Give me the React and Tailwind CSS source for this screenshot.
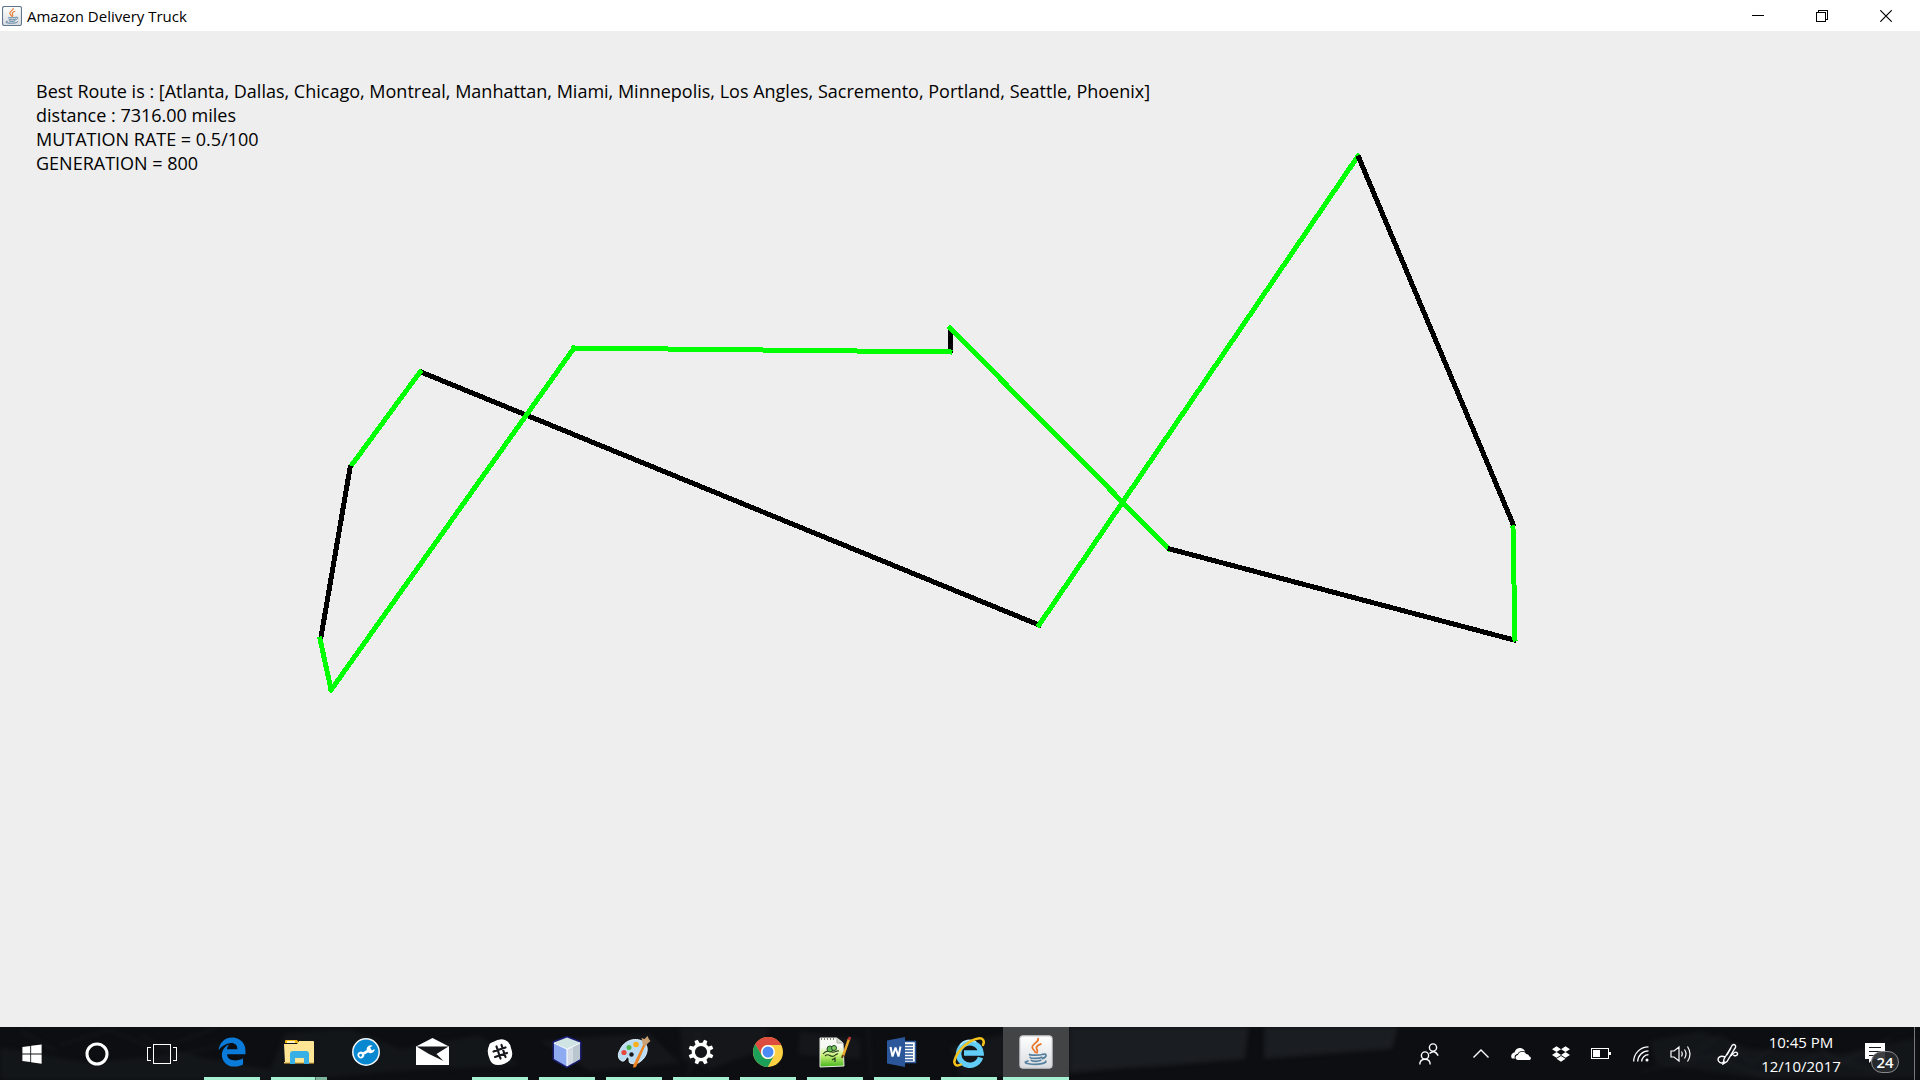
import React from "react";
import { FaWindows, FaDropbox, FaEdgeLegacy } from "react-icons/fa";

const GREEN = "#00ff00";
const BLACK = "#000000";

// Route legs in canvas pixels: x1, y1, x2, y2, colour
const legs = [
  [950, 298, 950, 319, BLACK],
  [950, 321, 574, 317, GREEN],
  [1169, 518, 950, 297, GREEN],
  [421, 341, 1039, 594, BLACK],
  [574, 317, 331, 659, GREEN],
  [420, 341, 351, 435, GREEN],
  [350, 437, 321, 606, BLACK],
  [320, 608, 331, 658, GREEN],
  [1039, 594, 1358, 125, GREEN],
  [1359, 127, 1513, 493, BLACK],
  [1514, 609, 1170, 518, BLACK],
  [1513, 497, 1515, 608, GREEN],
];

const report = [
  "Best Route is : [Atlanta, Dallas, Chicago, Montreal, Manhattan, Miami, Minnepolis, Los Angles, Sacremento, Portland, Seattle, Phoenix]",
  "distance : 7316.00 miles",
  "MUTATION RATE = 0.5/100",
  "GENERATION = 800",
];

function JavaIcon({ size }) {
  return (
    <svg width={size} height={size} viewBox="0 0 32 32" fill="none" aria-hidden="true">
      <defs>
        <linearGradient id={`tile${size}`} x1="0" y1="0" x2="0" y2="1">
          <stop offset="0" stopColor="#ffffff" />
          <stop offset="1" stopColor="#d9dcdf" />
        </linearGradient>
      </defs>
      <rect x="0.8" y="0.8" width="30.4" height="30.4" rx="3" fill={`url(#tile${size})`} stroke={size < 24 ? "#5f7890" : "#c3c8cc"} strokeWidth={size < 24 ? 1.8 : 1} />
      <path d="M18 3.500c1 3-5.500 4.500-5.500 8 0 2 2.200 2.800 2.800 4.800M20.500 8.500c-3 1-4.500 2.500-4 4.200.5 1.400 1.500 2 .4 4" stroke="#e8762b" strokeWidth="1.700" strokeLinecap="round" />
      <path d="M10 18.200c-1.500 1 10 1.200 12.500-.2M10.500 21c0 1.200 8 1.500 11 0M11.500 23.800c1 1.200 6.500 1.300 9 0M22.500 18.300c3.500-1.500 4.500 2.200-.5 3.900M8.500 24.500c-8 2 5 4 13 2.500 2.500-.5 4.500-1.500 3.500-2.300" stroke="#55809f" strokeWidth="1.600" strokeLinecap="round" />
    </svg>
  );
}

function TitleBar() {
  const control = "flex h-full w-16 items-center justify-center hover:bg-gray-200";
  return (
    <header className="flex h-[31px] shrink-0 items-center bg-white px-0.5 text-black">
      <JavaIcon size={20} />
      <h1 className="ml-[5px] flex-1 font-['Open_Sans','Noto_Sans',sans-serif] text-[15px] leading-5 font-normal">Amazon Delivery Truck</h1>
      <button className={control} aria-label="Minimize">
        <svg width="12" height="12" stroke="currentColor" shapeRendering="crispEdges"><path d="M0 5.500h12" /></svg>
      </button>
      <button className={control} aria-label="Restore">
        <svg width="12" height="12" fill="none" stroke="currentColor" shapeRendering="crispEdges"><path d="M.5 2.500h9v9h-9zM2.500 2.500v-2h9v9h-2" /></svg>
      </button>
      <button className={control} aria-label="Close">
        <svg width="12" height="12" stroke="currentColor" strokeWidth="1.200"><path d="M.3.3l11.400 11.400M11.700.3L.3 11.700" /></svg>
      </button>
    </header>
  );
}

function FolderIcon() {
  return (
    <svg width="30" height="26" viewBox="0 0 30 26">
      <path d="M1 2q0-1 1-1h11l2 3H1z" fill="#f5b914" />
      <path d="M3 2h8v2H3z" fill="#fff3c4" />
      <path d="M0 5h13l2-3h14q1 0 1 1v21H1z" fill="#ffe594" />
      <path d="M0 23h30v1.500H0z" fill="#e9c45f" />
      <path d="M6 25V15q0-3 3-3h13q3 0 3 3v10h-5v-6h-9v6z" fill="#38b0e5" />
    </svg>
  );
}

function WrenchIcon() {
  return (
    <svg width="28" height="28" viewBox="0 0 28 28">
      <circle cx="14" cy="14" r="13.200" fill="#0788d1" stroke="#f5f8fa" strokeWidth="1.500" />
      <g transform="rotate(-31 14 14)" fill="#fff">
        <path d="M9 12.600h9v2.800H9z" />
        <path d="M23 12.200h-3.200v3.600H23a4 4 0 1 1 0-3.600z" />
        <circle cx="8" cy="14" r="3.300" />
        <circle cx="7.700" cy="14" r="1.400" fill="#0788d1" />
      </g>
    </svg>
  );
}

function MailIcon() {
  return (
    <svg width="34" height="28" viewBox="0 0 34 28">
      <path d="M0 8.500L16.500 0 33 8.500V27H0z" fill="#fff" />
      <path d="M.5 8.500h32L20.500 16l7 7L13 16z" fill="#15171b" />
    </svg>
  );
}

function SlackIcon() {
  return (
    <svg width="26" height="26" viewBox="0 0 26 26">
      <path d="M2 7Q2 4 6 3q7-4 12-2 5 2 6 8 3 8-1 12-5 5-12 5-6 0-8-5Q-1 12 2 7z" fill="#fff" />
      <path d="M9.500 7.500l4 12M14.500 6l4 12M6.500 12.500l12-4M8 18l12-4" stroke="#18191c" strokeWidth="2.200" strokeLinecap="round" />
    </svg>
  );
}

function CubeIcon() {
  return (
    <svg width="32" height="32" viewBox="0 0 32 32">
      <path d="M16 1.500l13 5V23l-13 7.500L3 23V6.500z" fill="none" stroke="#1b1d73" strokeWidth="3" strokeLinejoin="round" />
      <path d="M16 1.500l13 5L16 13 3 6.500z" fill="#cfe4e3" />
      <path d="M3 6.500L16 13v17.500L3 23z" fill="#8eaaf0" />
      <path d="M29 6.500L16 13v17.500L29 23z" fill="#d3dae3" />
      <path d="M22 10l7-3.500V23l-7 4z" fill="#b9c6d0" />
      <path d="M3 7l13 6 13-6M16 13v17" fill="none" stroke="#f4faff" strokeWidth="1.200" />
    </svg>
  );
}

function PaintIcon() {
  return (
    <svg width="34" height="34" viewBox="0 0 34 34">
      <path d="M3 15C7 5 20 1 28 8c5 6 1 16-7 20-3 1-6 1-8 0-2-2 0-5-2-6s-2 5-6 4c-5-2-4-8-2-11z" fill="#b9dcf2" stroke="#e4f4fd" />
      <circle cx="14.500" cy="19.500" r="2.200" fill="#17191c" />
      <circle cx="7" cy="17.500" r="2.600" fill="#e8473c" />
      <circle cx="12" cy="12.500" r="2.500" fill="#50b848" />
      <circle cx="19" cy="9.500" r="2.800" fill="#f8b01c" />
      <path d="M26.500 9l2 1-9.500 22-3 .8.500-3z" fill="#ee8422" />
      <path d="M25.500 9q0-3-1-6l3 1 3-3q1 3 3 5-3 2-5 5z" fill="#cba273" />
    </svg>
  );
}

function GearIcon() {
  return (
    <svg width="26" height="26" viewBox="-13 -13 26 26">
      <circle r="7.700" fill="none" stroke="#fff" strokeWidth="3.200" />
      {[22, 67, 112, 157, 202, 247, 292, 337].map((a) => (
        <path key={a} transform={`rotate(${a})`} d="M-2.300-8.300L-1.700-12.600h3.400L2.300-8.300z" fill="#fff" />
      ))}
    </svg>
  );
}

function ChromeIcon() {
  return (
    <svg width="32" height="32" viewBox="0 0 32 32">
      <circle cx="16" cy="16" r="15" fill="#fdd044" />
      <path d="M16 9h13.300A15 15 0 0 0 3.200 8.300L9.900 19.500A7 7 0 0 1 16 9z" fill="#dc4d3f" />
      <path d="M3.200 8.300A15 15 0 0 0 15.800 31l6.300-11.500a7 7 0 0 1-12.200 0z" fill="#1c9f59" />
      <circle cx="16" cy="16" r="7" fill="#fff" />
      <circle cx="16" cy="16" r="5.500" fill="#4c8bf5" />
    </svg>
  );
}

function NotepadIcon() {
  return (
    <svg width="34" height="32" viewBox="0 0 34 32" fill="none">
      <defs>
        <linearGradient id="page" x1="0" y1="0" x2="0" y2="1">
          <stop offset="0.300" stopColor="#f7f9f5" />
          <stop offset="0.600" stopColor="#c9f177" />
          <stop offset="1" stopColor="#42b51b" />
        </linearGradient>
      </defs>
      <path d="M2 2h17l6 5 1 23-24 1z" fill="url(#page)" stroke="#e9ece5" />
      <path d="M19 2v5h6" fill="#d8dcd3" stroke="#aab0a3" />
      <path d="M3 3h15" stroke="#7c8276" strokeDasharray="1 2" strokeWidth="2" />
      <path d="M5 18c3-4 6-3 9-2s4-2 7-1M7 20c4-4 5 2 9 0 2-1 3-3 4-2M14 24l3-2v4" stroke="#263b1c" strokeWidth="1.200" />
      <circle cx="12" cy="13" r="3" fill="#66b957" stroke="#244c1d" />
      <circle cx="16" cy="12" r="2.500" fill="#80ca69" stroke="#244c1d" />
      <path d="M31 3L25 20" stroke="#eba92d" strokeWidth="2.500" />
      <path d="M32 1l-1 3" stroke="#bd3d35" strokeWidth="2.500" />
      <path d="M25 19l-1 3" stroke="#65421b" strokeWidth="2" />
    </svg>
  );
}

function WordIcon() {
  return (
    <svg width="30" height="30" viewBox="0 0 30 30">
      <path d="M15 4.500h13.500v21H15z" fill="#fff" stroke="#2b579a" strokeWidth="1.500" />
      <path d="M17 8h9M17 11h9M17 14h9M17 17h9M17 20h9M17 23h9" stroke="#2b579a" strokeWidth="1.300" />
      <path d="M0 3.500L18 0v30L0 26.500z" fill="#2b579a" />
      <path d="M3.500 10l2 9.500 3-9 3 9 2-10" fill="none" stroke="#fff" strokeWidth="2" strokeLinejoin="bevel" />
    </svg>
  );
}

function ExplorerIcon() {
  return (
    <svg width="34" height="32" viewBox="0 0 34 32" fill="none">
      <path d="M28.500 21.500A11.200 11.200 0 1 1 29 17H12" stroke="#62cdf6" strokeWidth="5.500" />
      <path d="M8 9.500a12 12 0 0 1 16-3.500" stroke="#b7ecff" strokeWidth="1.500" />
      <path d="M31 9c2-4 0-7.500-5-6.500C17 4 6 14 3 23c-2 5 1 8 6 5.500" stroke="#f5c21b" strokeWidth="2.500" strokeLinecap="round" />
    </svg>
  );
}

const apps = [
  ["Microsoft Edge", <FaEdgeLegacy size={30} color="#0a7bd9" />, true],
  ["File Explorer", <FolderIcon />, true],
  ["Support Assistant", <WrenchIcon />, false],
  ["Mail", <MailIcon />, false],
  ["Slack", <SlackIcon />, true],
  ["NetBeans", <CubeIcon />, true],
  ["Paint", <PaintIcon />, true],
  ["Settings", <GearIcon />, true],
  ["Google Chrome", <ChromeIcon />, true],
  ["Notepad++", <NotepadIcon />, true],
  ["Word", <WordIcon />, true],
  ["Internet Explorer", <ExplorerIcon />, true],
];

const line = { fill: "none", stroke: "#fff", strokeWidth: 1.4 };

const tray = [
  ["Show hidden icons", <svg width="16" height="9" {...line}><path d="M.5 8.500L8 1l7.500 7.500" /></svg>],
  ["OneDrive", (
    <svg width="20" height="13" viewBox="0 0 20 13" fill="#fff">
      <path d="M1 11.500C-1 9 1 5.500 3.500 5.500 4 2 8 0 11 1.500c1.500.5 2.500 1.700 3 3-3-1.500-6.500 0-7.500 2.500C4 7 3 9.500 4 11.500z" />
      <path d="M7 13c-3 0-3.500-4.500 0-5 .5-4 7-4.500 8-1 2 0 3 1 3 2.200 2.500.3 2.500 3.800 0 3.800z" />
    </svg>
  )],
  ["Dropbox", <FaDropbox size={18} />],
  ["Battery", (
    <svg width="20" height="12" shapeRendering="crispEdges"><path d="M.5.5h17v10H.5z" fill="none" stroke="#fff" /><path d="M2 2h7v7H2zM18 4h2v3h-2z" fill="#fff" /></svg>
  )],
  ["Network", (
    <svg width="16" height="16" viewBox="0 0 16 16" fill="none" stroke="#fff" strokeWidth="1.300">
      <path d="M.7 15.500A14.800 14.800 0 0 1 15.500.8M4.700 15.500A10.800 10.800 0 0 1 15.500 4.800M8.700 15.500a6.800 6.800 0 0 1 6.800-6.800" />
      <circle cx="14" cy="14" r="1.500" fill="#fff" stroke="none" />
    </svg>
  )],
  ["Volume", (
    <svg width="22" height="18" viewBox="0 0 22 18" fill="none" stroke="#fff" strokeWidth="1.200">
      <path d="M1 6h3l5-4v14l-5-4H1zM11.500 6.500q1.500 2.500 0 5M14.500 4.500q3 4.500 0 9M17.500 1.500q5 7.500 0 15" />
    </svg>
  )],
];

function PeopleIcon() {
  return (
    <svg width="20" height="22" viewBox="0 0 20 22" {...line}>
      <circle cx="14" cy="4.500" r="3.600" />
      <path d="M10.500 10.500q5-4.500 8.700 2.200" />
      <circle cx="6" cy="12.500" r="3.600" />
      <path d="M.8 21.500q0-5.300 5.200-5.300t5.200 5.300" />
    </svg>
  );
}

function PenIcon() {
  return (
    <svg width="22" height="22" viewBox="0 0 22 22" {...line}>
      <path d="M7 16L14.500 3.500q1.500-3 3.500-1.500 1.500 1.500-.5 4L10 18.500 6 21zM10 12l4-7" />
      <path d="M8 14c-5-2-8 1-6.500 4s5 2 6.500.5M14 13c2-4 6-5 6.500-2.500s-4 3-4 1" />
    </svg>
  );
}

function TaskbarTexture() {
  return (
    <svg className="absolute inset-0 h-full w-full blur-[2px]" viewBox="0 0 1920 53" preserveAspectRatio="none" aria-hidden="true">
      <g fill="#1a1d21">
        <path d="M0 20L90 36 180 26 270 43 285 6 350 2 400 22 480 8 520 38 400 44 300 53H0z" opacity=".55" />
        <path d="M540 14l110-8 30 30-90 8zM680 0h90l-10 24-50 18-28-10zM800 4l60 8v20l-62-4zM950 20l60-14v44h-50z" opacity=".6" />
        <path d="M1069 0h180l-4 32-70 6-60 4-46 4zM1264 0h134l-6 22-54 4-74 6z" />
        <path d="M1650 14l50-10 50 18 90 5 76-16v40h-160l-100-14z" opacity=".5" />
      </g>
      <g fill="none" stroke="#262930" strokeWidth="1.500" opacity=".5">
        <path d="M60 18l50-15 46 20 60-22M140 8l40 20 50-12M20 4l36 20M700 4l-12 46M868 0l4 50M1690 30l30-22 32 28 40-30M1800 6l40 30 50-25M1640 45l70-16 60 22 50-25 60 20" />
      </g>
    </svg>
  );
}

function Taskbar() {
  const system = "flex h-full w-16 items-center justify-center hover:bg-white/10";
  return (
    <footer className="relative h-[53px] shrink-0 overflow-hidden bg-[#0c0e11] font-['Open_Sans','Noto_Sans',sans-serif] text-white">
      <TaskbarTexture />
      <div className="relative flex h-full">
        <div className="flex gap-px pr-[5px]">
          <button className={system} aria-label="Start"><FaWindows size={22} /></button>
          <button className={system} aria-label="Cortana">
            <svg width="24" height="24"><circle cx="12" cy="12" r="10" fill="none" stroke="#fff" strokeWidth="3" /></svg>
          </button>
          <button className={system} aria-label="Task View">
            <svg width="30" height="20" fill="none" stroke="#fff" shapeRendering="crispEdges"><path d="M6.500.5h17v19h-17zM4 3.500H.5v13H4M26 3.500h3.500v13H26" /></svg>
          </button>
        </div>
        <nav className="flex gap-px" aria-label="Running apps">
          {apps.map(([name, icon, running]) => (
            <button key={name} aria-label={name} className="flex w-[66px] flex-col hover:bg-white/10">
              <span className="flex flex-1 items-center justify-center self-stretch">{icon}</span>
              <span className={running ? "mx-[5px] flex h-[3px] self-stretch bg-[#a5f0d0]" : "h-[3px]"}>
                {name === "File Explorer" && <span className="ml-auto w-3 border-l border-[#47705f] bg-[#7cb59c]" />}
              </span>
            </button>
          ))}
          <button aria-label="Amazon Delivery Truck" className="flex w-[66px] flex-col bg-[#434446]">
            <span className="flex flex-1 items-center justify-center self-stretch"><JavaIcon size={34} /></span>
            <span className="h-[3px] self-stretch bg-[#a5f0d0]" />
          </button>
        </nav>
        <div className="ml-auto flex items-center">
          <button className="flex h-full w-16 items-center justify-center" aria-label="People"><PeopleIcon /></button>
          {tray.map(([name, icon]) => (
            <button key={name} aria-label={name} className="flex h-full w-10 items-center justify-center">{icon}</button>
          ))}
          <button className="flex h-full w-[54px] items-center justify-center" aria-label="Windows Ink Workspace"><PenIcon /></button>
          <button className="flex h-full w-[92px] flex-col items-center justify-center text-[15px] leading-6">
            <time>10:45 PM</time>
            <time>12/10/2017</time>
          </button>
          <button className="relative h-full w-[67px]" aria-label="24 notifications">
            <svg className="absolute top-4 left-[18px]" width="20" height="20"><path d="M0 0h20v16H8l-4 4v-4H0z" fill="#fff" /><path d="M4 4.500h12M4 8.500h12M4 12.500h7" stroke="#15171b" /></svg>
            <span className="absolute top-6 left-6 flex h-[22px] w-7 items-center justify-center rounded-full border border-[#87898c] bg-[#292b2e]/90 text-[15px] leading-5 font-semibold">24</span>
          </button>
          <button className="h-full w-1.5 border-l border-[#74777b]" aria-label="Show desktop" />
        </div>
      </div>
    </footer>
  );
}

export default function App() {
  return (
    <div className="flex h-screen flex-col overflow-hidden bg-[#eeeeee]">
      <TitleBar />
      <main className="relative min-h-0 flex-1 bg-[#eeeeee] px-9 pt-12 font-['Open_Sans','Noto_Sans',sans-serif] text-[18px] leading-6 text-black">
        <svg className="absolute inset-0 h-full w-full" role="img" aria-label="Delivery route" shapeRendering="crispEdges">
          {legs.map(([x1, y1, x2, y2, color], i) => (
            <line key={i} x1={x1} y1={y1} x2={x2} y2={y2} stroke={color} strokeWidth="5" strokeLinecap="square" />
          ))}
        </svg>
        <div className="relative">
          {report.map((row) => <p key={row}>{row}</p>)}
        </div>
      </main>
      <Taskbar />
    </div>
  );
}
